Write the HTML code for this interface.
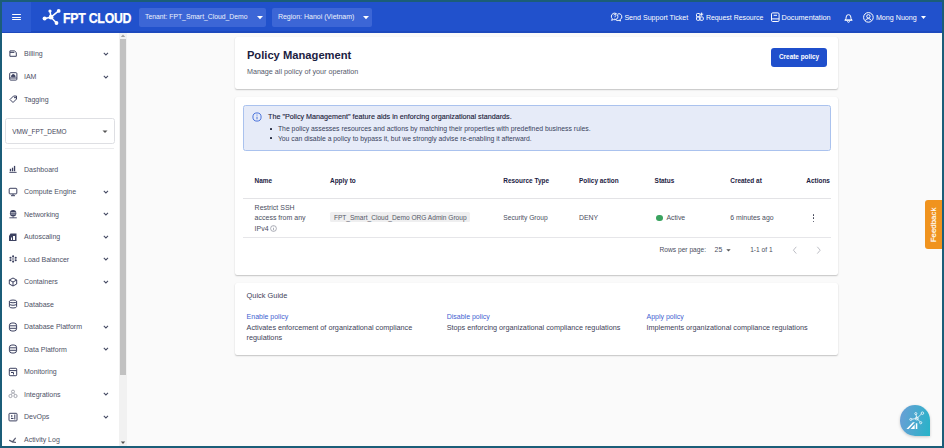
<!DOCTYPE html>
<html><head><meta charset="utf-8"><style>
html,body{margin:0;padding:0;width:944px;height:448px;overflow:hidden;position:relative;font-family:"Liberation Sans", sans-serif}
.t{position:absolute;line-height:1;white-space:nowrap}
</style></head><body>
<div style="position:absolute;left:0px;top:0px;width:944px;height:448px;background:#1b5d78"></div>
<div style="position:absolute;left:2px;top:2px;width:940px;height:444px;background:#fafafa"></div>
<div style="position:absolute;left:2px;top:2px;width:940px;height:30px;background:#2151cc"></div>
<div style="position:absolute;left:2px;top:31px;width:940px;height:1.5px;background:#1d49bd"></div>
<div style="position:absolute;left:2px;top:2px;width:29px;height:30px;background:#2c5bd2"></div>
<div style="position:absolute;left:11.6px;top:14.2px;width:9.3px;height:1.1px;background:#fff;border-radius:1px"></div>
<div style="position:absolute;left:11.6px;top:16.7px;width:9.3px;height:1.1px;background:#fff;border-radius:1px"></div>
<div style="position:absolute;left:11.6px;top:19.2px;width:9.3px;height:1.1px;background:#fff;border-radius:1px"></div>
<svg style="position:absolute;left:42px;top:8px;" width="20" height="18" viewBox="0 0 20 18"><g stroke="#fff" stroke-width="1.5" fill="#fff">
<line x1="9" y1="9.2" x2="2.6" y2="10.6"/><line x1="9" y1="9.2" x2="8" y2="3"/>
<line x1="9" y1="9.2" x2="16.7" y2="2.9"/><line x1="9" y1="9.2" x2="14.5" y2="15"/></g><g fill="#fff">
<circle cx="9" cy="9.2" r="2.4"/><circle cx="2.6" cy="10.6" r="2.0"/><circle cx="8" cy="3" r="1.6"/>
<circle cx="16.7" cy="2.9" r="1.9"/><circle cx="14.5" cy="15" r="1.9"/></g></svg>
<div class="t" style="left:62.90px;top:11px;font-size:14.6px;color:#fff;font-weight:700;letter-spacing:-0.3px;transform:scaleX(0.845);transform-origin:0 0;-webkit-text-stroke:0.25px #fff">FPT CLOUD</div>
<div style="position:absolute;left:138.9px;top:8.2px;width:126.9px;height:18.4px;background:#3c66d6;border-radius:2px"></div>
<div class="t" style="left:145.10px;top:14px;font-size:6.8px;color:#eef2fc;font-weight:400;">Tenant: FPT_Smart_Cloud_Demo</div>
<svg style="position:absolute;left:257px;top:16px;" width="7" height="4" viewBox="0 0 7 4"><path d="M0 0 L6 0 L3 3.2Z" fill="#fff"/></svg>
<div style="position:absolute;left:271.9px;top:8.2px;width:100.2px;height:18.4px;background:#3c66d6;border-radius:2px"></div>
<div class="t" style="left:277.90px;top:13px;font-size:7.0px;color:#eef2fc;font-weight:400;">Region: Hanoi (Vietnam)</div>
<svg style="position:absolute;left:363.4px;top:16px;" width="7" height="4" viewBox="0 0 7 4"><path d="M0 0 L6 0 L3 3.2Z" fill="#fff"/></svg>
<svg style="position:absolute;left:609.3px;top:8px;" width="16" height="16" viewBox="0 0 16 16"><g fill="none" stroke="#fff" stroke-width="0.95" stroke-linejoin="round">
<path d="M3.4 10.9 A3.3 3.3 0 1 1 4.6 11.6 L2.5 12.3 Z"/>
<path d="M8.8 5.9 A3 3 0 0 1 10.9 11.6 L11.6 13 L9.9 12.4 A3 3 0 0 1 6.6 11.6"/>
<path d="M4.9 7.3 a1.05 1.05 0 1 1 1.5 0.95 l-0.5 0.5 v0.45"/></g><circle cx="5.9" cy="10.2" r="0.45" fill="#fff"/></svg>
<div class="t" style="left:624.40px;top:15px;font-size:7.1px;color:#fff;font-weight:400;">Send Support Ticket</div>
<svg style="position:absolute;left:693px;top:8px;" width="15" height="16" viewBox="0 0 15 16"><g fill="none" stroke="#fff" stroke-width="0.95">
<rect x="3.5" y="5.5" width="3.4" height="3.4" rx="0.9"/><rect x="3.5" y="8.9" width="3.4" height="3.4" rx="0.9"/>
<rect x="6.9" y="8.9" width="3.4" height="3.4" rx="0.9"/><path d="M8.6 4.6 v3.2 M7 6.2 h3.2"/></g></svg>
<div class="t" style="left:705.90px;top:15px;font-size:6.95px;color:#fff;font-weight:400;">Request Resource</div>
<svg style="position:absolute;left:768px;top:8px;" width="16" height="16" viewBox="0 0 16 16"><g fill="none" stroke="#fff" stroke-width="1">
<rect x="3.5" y="4.9" width="7.6" height="8.6" rx="1.2"/><path d="M3.5 10.9 h7.6 M5.6 7.3 h3.4"/></g></svg>
<div class="t" style="left:781.40px;top:14px;font-size:7.33px;color:#fff;font-weight:400;">Documentation</div>
<svg style="position:absolute;left:843.5px;top:12px;" width="9" height="11" viewBox="0 0 9 11"><g fill="none" stroke="#fff" stroke-width="1">
<path d="M1.2 8 q1 -1 1 -3 a2.3 2.3 0 0 1 4.6 0 q0 2 1 3z"/><path d="M0.5 8.2 h8"/><path d="M3.5 9.3 a1 1 0 0 0 2 0"/></g></svg>
<svg style="position:absolute;left:862.8px;top:11.5px;" width="11" height="11" viewBox="0 0 11 11"><g fill="none" stroke="#fff" stroke-width="1">
<circle cx="5.4" cy="5.4" r="4.8"/><circle cx="5.4" cy="4.3" r="1.7"/><path d="M2.5 8.6 q0.6 -2 2.9 -2 q2.3 0 2.9 2"/></g></svg>
<div class="t" style="left:875.90px;top:15px;font-size:7.15px;color:#fff;font-weight:400;">Mong Nuong</div>
<svg style="position:absolute;left:920.5px;top:16px;" width="6" height="4" viewBox="0 0 6 4"><path d="M0 0 L5 0 L2.5 3Z" fill="#fff"/></svg>
<div style="position:absolute;left:2px;top:32.5px;width:117px;height:413.5px;background:#fff"></div>
<div style="position:absolute;left:119px;top:32.5px;width:8px;height:413.5px;background:#f1f1f1"></div>
<div style="position:absolute;left:119.8px;top:39.3px;width:6.4px;height:336px;background:#c1c1c1"></div>
<svg style="position:absolute;left:120px;top:33.5px;" width="6" height="4" viewBox="0 0 6 4"><path d="M0.8 3 L3 0.6 L5.2 3Z" fill="#a3a3a3"/></svg>
<svg style="position:absolute;left:120px;top:441px;" width="6" height="4" viewBox="0 0 6 4"><path d="M0.8 0.6 L3 3 L5.2 0.6Z" fill="#505050"/></svg>
<div class="t" style="left:24.00px;top:50px;font-size:7.0px;color:#4d5166;font-weight:400;">Billing</div>
<svg style="position:absolute;left:102.5px;top:52.0px;" width="6" height="4" viewBox="0 0 6 4"><path d="M0.8 0.8 L2.9 2.9 L5 0.8" fill="none" stroke="#454a63" stroke-width="1.05"/></svg>
<div class="t" style="left:24.00px;top:73px;font-size:7.0px;color:#4d5166;font-weight:400;">IAM</div>
<svg style="position:absolute;left:102.5px;top:74.6px;" width="6" height="4" viewBox="0 0 6 4"><path d="M0.8 0.8 L2.9 2.9 L5 0.8" fill="none" stroke="#454a63" stroke-width="1.05"/></svg>
<div class="t" style="left:24.00px;top:96px;font-size:7.0px;color:#4d5166;font-weight:400;">Tagging</div>
<svg style="position:absolute;left:8.5px;top:49.5px;" width="9" height="8" viewBox="0 0 9 8"><g fill="none" stroke="#3c4160" stroke-width="1"><path d="M0.9 0.9 h4.6 l1.8 1.6 v3.8 h-6.4z"/><path d="M0.9 2.4 h4.5"/></g></svg>
<svg style="position:absolute;left:8.5px;top:72px;" width="9" height="9" viewBox="0 0 9 9"><g fill="none" stroke="#3c4160" stroke-width="1"><rect x="0.7" y="0.7" width="7.2" height="7.4" rx="1"/><path d="M2.5 4.8 q0 -2.2 1.8 -2.2 q1.8 0 1.8 2.2z" fill="#3c4160"/><path d="M0.7 6 h7.2"/></g></svg>
<svg style="position:absolute;left:8.5px;top:94.5px;" width="9" height="9" viewBox="0 0 9 9"><g fill="none" stroke="#3c4160" stroke-width="1"><path d="M1 4.5 L4.5 1 h3 v3 L4 7.5z"/><circle cx="6" cy="2.6" r="0.5" fill="#3c4160"/></g></svg>
<div style="position:absolute;left:5.4px;top:118.1px;width:109.2px;height:25.9px;box-sizing:border-box;border:1px solid #dedfe3;border-radius:2.5px;background:#fff"></div>
<div class="t" style="left:12.20px;top:129px;font-size:6.45px;color:#3f4358;font-weight:400;">VMW_FPT_DEMO</div>
<svg style="position:absolute;left:102px;top:129.5px;" width="7" height="4" viewBox="0 0 7 4"><path d="M0.5 0.5 L5.5 0.5 L3 3Z" fill="#555"/></svg>
<div style="position:absolute;left:5.4px;top:148px;width:108.8px;height:1px;background:#ececee"></div>
<div class="t" style="left:24.00px;top:166px;font-size:7.0px;color:#4d5166;font-weight:400;">Dashboard</div>
<div class="t" style="left:24.00px;top:188px;font-size:7.0px;color:#4d5166;font-weight:400;">Compute Engine</div>
<svg style="position:absolute;left:102.5px;top:189.6px;" width="6" height="4" viewBox="0 0 6 4"><path d="M0.8 0.8 L2.9 2.9 L5 0.8" fill="none" stroke="#454a63" stroke-width="1.05"/></svg>
<div class="t" style="left:24.00px;top:211px;font-size:7.0px;color:#4d5166;font-weight:400;">Networking</div>
<svg style="position:absolute;left:102.5px;top:212.1px;" width="6" height="4" viewBox="0 0 6 4"><path d="M0.8 0.8 L2.9 2.9 L5 0.8" fill="none" stroke="#454a63" stroke-width="1.05"/></svg>
<div class="t" style="left:24.00px;top:233px;font-size:7.0px;color:#4d5166;font-weight:400;">Autoscaling</div>
<svg style="position:absolute;left:102.5px;top:234.6px;" width="6" height="4" viewBox="0 0 6 4"><path d="M0.8 0.8 L2.9 2.9 L5 0.8" fill="none" stroke="#454a63" stroke-width="1.05"/></svg>
<div class="t" style="left:24.00px;top:256px;font-size:7.0px;color:#4d5166;font-weight:400;">Load Balancer</div>
<svg style="position:absolute;left:102.5px;top:257.1px;" width="6" height="4" viewBox="0 0 6 4"><path d="M0.8 0.8 L2.9 2.9 L5 0.8" fill="none" stroke="#454a63" stroke-width="1.05"/></svg>
<div class="t" style="left:24.00px;top:278px;font-size:7.0px;color:#4d5166;font-weight:400;">Containers</div>
<svg style="position:absolute;left:102.5px;top:279.6px;" width="6" height="4" viewBox="0 0 6 4"><path d="M0.8 0.8 L2.9 2.9 L5 0.8" fill="none" stroke="#454a63" stroke-width="1.05"/></svg>
<div class="t" style="left:24.00px;top:301px;font-size:7.0px;color:#4d5166;font-weight:400;">Database</div>
<div class="t" style="left:24.00px;top:323px;font-size:7.0px;color:#4d5166;font-weight:400;">Database Platform</div>
<svg style="position:absolute;left:102.5px;top:324.6px;" width="6" height="4" viewBox="0 0 6 4"><path d="M0.8 0.8 L2.9 2.9 L5 0.8" fill="none" stroke="#454a63" stroke-width="1.05"/></svg>
<div class="t" style="left:24.00px;top:346px;font-size:7.0px;color:#4d5166;font-weight:400;">Data Platform</div>
<svg style="position:absolute;left:102.5px;top:347.1px;" width="6" height="4" viewBox="0 0 6 4"><path d="M0.8 0.8 L2.9 2.9 L5 0.8" fill="none" stroke="#454a63" stroke-width="1.05"/></svg>
<div class="t" style="left:24.00px;top:368px;font-size:7.0px;color:#4d5166;font-weight:400;">Monitoring</div>
<div class="t" style="left:24.00px;top:391px;font-size:7.0px;color:#4d5166;font-weight:400;">Integrations</div>
<svg style="position:absolute;left:102.5px;top:392.1px;" width="6" height="4" viewBox="0 0 6 4"><path d="M0.8 0.8 L2.9 2.9 L5 0.8" fill="none" stroke="#454a63" stroke-width="1.05"/></svg>
<div class="t" style="left:24.00px;top:413px;font-size:7.0px;color:#4d5166;font-weight:400;">DevOps</div>
<svg style="position:absolute;left:102.5px;top:414.6px;" width="6" height="4" viewBox="0 0 6 4"><path d="M0.8 0.8 L2.9 2.9 L5 0.8" fill="none" stroke="#454a63" stroke-width="1.05"/></svg>
<div class="t" style="left:24.00px;top:436px;font-size:7.0px;color:#4d5166;font-weight:400;">Activity Log</div>
<svg style="position:absolute;left:8.2px;top:164.2px;" width="10" height="10" viewBox="0 0 10 10"><path d="M1.4 8.4 h7.2" stroke="#3c4160" stroke-width="0.9"/><g fill="#3c4160"><rect x="1.8" y="4.8" width="1.3" height="2.5"/><rect x="3.9" y="3.7" width="1.3" height="3.6"/><rect x="5.9" y="1.9" width="1.3" height="5.4"/></g></svg>
<svg style="position:absolute;left:8.2px;top:186.7px;" width="10" height="10" viewBox="0 0 10 10"><g fill="none" stroke="#3c4160" stroke-width="1"><rect x="1.2" y="1.3" width="7.6" height="5.6" rx="0.8"/><path d="M5 7 v1.5 M3 8.7 h4"/></g></svg>
<svg style="position:absolute;left:8.2px;top:209.2px;" width="10" height="10" viewBox="0 0 10 10"><circle cx="5.1" cy="4.3" r="3.2" fill="#3c4160"/><path d="M2.6 3.6 h5 M2.6 5.1 h5" stroke="#fff" stroke-width="0.6"/><path d="M5.1 7.4 v1.2 M1.4 8.8 h7.4" stroke="#3c4160" stroke-width="0.9"/></svg>
<svg style="position:absolute;left:8.2px;top:231.7px;" width="10" height="10" viewBox="0 0 10 10"><path d="M2.5 1.5 h6 v7.5 h-7.5 v-5z" fill="#3c4160"/><path d="M5 4 h2 v4 h-2z M3 5.5 h1 v2.5h-1z" fill="#fff"/></svg>
<svg style="position:absolute;left:8.2px;top:254.2px;" width="10" height="10" viewBox="0 0 10 10"><g fill="#3c4160"><circle cx="5.1" cy="2.4" r="1.05"/><circle cx="2.5" cy="3.8" r="1.05"/><circle cx="7.7" cy="3.8" r="1.05"/><circle cx="2.5" cy="6.3" r="1.05"/><circle cx="7.7" cy="6.3" r="1.05"/><circle cx="5.1" cy="7.6" r="1.05"/></g><circle cx="5.1" cy="5" r="0.9" fill="none" stroke="#3c4160" stroke-width="0.5"/></svg>
<svg style="position:absolute;left:8.2px;top:276.7px;" width="10" height="10" viewBox="0 0 10 10"><g fill="none" stroke="#3c4160" stroke-width="1"><path d="M5 1 L8.7 3 v4 L5 9 L1.3 7 v-4z M1.3 3 L5 5 L8.7 3 M5 5 v4"/></g></svg>
<svg style="position:absolute;left:8.2px;top:299.2px;" width="10" height="10" viewBox="0 0 10 10"><g fill="none" stroke="#3c4160" stroke-width="1"><ellipse cx="5" cy="2.4" rx="3.6" ry="1.4"/><path d="M1.4 2.4 v5.2 q0 1.4 3.6 1.4 q3.6 0 3.6 -1.4 v-5.2 M1.4 4.9 q0 1.4 3.6 1.4 q3.6 0 3.6 -1.4"/></g></svg>
<svg style="position:absolute;left:8.2px;top:321.7px;" width="10" height="10" viewBox="0 0 10 10"><g fill="none" stroke="#3c4160" stroke-width="1"><rect x="1.4" y="1" width="7.2" height="8" rx="2.5"/><path d="M1.4 3.8 h7.2 M1.4 6.3 h7.2"/></g></svg>
<svg style="position:absolute;left:8.2px;top:344.2px;" width="10" height="10" viewBox="0 0 10 10"><g fill="none" stroke="#3c4160" stroke-width="1"><rect x="1.4" y="1" width="7.2" height="8" rx="2.5"/><path d="M1.4 3.8 h7.2 M1.4 6.3 h7.2"/></g></svg>
<svg style="position:absolute;left:8.2px;top:366.7px;" width="10" height="10" viewBox="0 0 10 10"><g fill="none" stroke="#3c4160" stroke-width="1"><rect x="1.3" y="1.3" width="7.4" height="7.4" rx="0.8"/><path d="M1.3 3.6 h7.4 M3 5.5 h2.5 v2"/></g></svg>
<svg style="position:absolute;left:8.2px;top:389.2px;" width="10" height="10" viewBox="0 0 10 10"><g fill="none" stroke="#9a9ca6" stroke-width="0.9"><circle cx="5" cy="2.6" r="1.5"/><circle cx="2.5" cy="7" r="1.6"/><circle cx="7.5" cy="7" r="1.6"/><path d="M4.3 4 L3.3 5.6 M5.7 4 L6.7 5.6"/></g></svg>
<svg style="position:absolute;left:8.2px;top:411.7px;" width="10" height="10" viewBox="0 0 10 10"><g fill="none" stroke="#3c4160" stroke-width="1"><rect x="1" y="1.3" width="8" height="7.6" rx="0.8"/><path d="M3 6.5 h2.5 M3.8 3 v2.3 M6.8 2.5 v5"/></g></svg>
<svg style="position:absolute;left:8.2px;top:434.2px;" width="10" height="10" viewBox="0 0 10 10"><g fill="none" stroke="#5a5d72" stroke-width="1.3" stroke-linecap="round"><path d="M1.6 6.4 L4.4 7.9 L7.3 4.3 M4.4 7.9 L7.4 8.3"/></g></svg>
<div style="position:absolute;left:235px;top:36.5px;width:603px;height:52.5px;background:#fff;border-radius:2px;box-shadow:0 1px 1.5px rgba(0,0,0,0.22),0 0 1px rgba(0,0,0,0.05)"></div>
<div class="t" style="left:246.90px;top:50px;font-size:11.2px;color:#1b2142;font-weight:700;">Policy Management</div>
<div class="t" style="left:246.90px;top:68px;font-size:7.2px;color:#555a6c;font-weight:400;">Manage all policy of your operation</div>
<div style="position:absolute;left:770.9px;top:48.4px;width:55.8px;height:18.3px;background:#1f4fcc;border-radius:3px"></div>
<div class="t" style="left:779.00px;top:54px;font-size:6.4px;color:#fff;font-weight:700;">Create policy</div>
<div style="position:absolute;left:235px;top:97.2px;width:603px;height:177.6px;background:#fff;border-radius:2px;box-shadow:0 1px 1.5px rgba(0,0,0,0.22),0 0 1px rgba(0,0,0,0.05)"></div>
<div style="position:absolute;left:242.8px;top:105.2px;width:588.1px;height:45.7px;box-sizing:border-box;background:#e6ebf8;border:1px solid #aac2ee;border-radius:2.5px"></div>
<svg style="position:absolute;left:251.5px;top:112px;" width="10" height="10" viewBox="0 0 10 10"><g fill="none" stroke="#3a66d8" stroke-width="0.9"><circle cx="5" cy="5" r="4.1"/><path d="M5 4.7 v2.6"/></g><circle cx="5" cy="3.0" r="0.55" fill="#3a66d8"/></svg>
<div class="t" style="left:268.00px;top:113px;font-size:7.19px;color:#1a2038;font-weight:400;-webkit-text-stroke:0.12px #1a2038">The "Policy Management" feature aids in enforcing organizational standards.</div>
<div style="position:absolute;left:270.4px;top:128.0px;width:2px;height:2px;background:#2a2f45;border-radius:0.5px"></div>
<div class="t" style="left:277.90px;top:126px;font-size:6.85px;color:#383f5c;font-weight:400;">The policy assesses resources and actions by matching their properties with predefined business rules.</div>
<div style="position:absolute;left:270.4px;top:137.2px;width:2px;height:2px;background:#2a2f45;border-radius:0.5px"></div>
<div class="t" style="left:277.90px;top:136px;font-size:6.82px;color:#383f5c;font-weight:400;">You can disable a policy to bypass it, but we strongly advise re-enabling it afterward.</div>
<div class="t" style="left:254.60px;top:178px;font-size:6.45px;color:#1b2142;font-weight:700;">Name</div>
<div class="t" style="left:330.00px;top:178px;font-size:6.45px;color:#1b2142;font-weight:700;">Apply to</div>
<div class="t" style="left:503.30px;top:178px;font-size:6.45px;color:#1b2142;font-weight:700;">Resource Type</div>
<div class="t" style="left:579.00px;top:178px;font-size:6.45px;color:#1b2142;font-weight:700;">Policy action</div>
<div class="t" style="left:654.60px;top:178px;font-size:6.45px;color:#1b2142;font-weight:700;">Status</div>
<div class="t" style="left:730.30px;top:178px;font-size:6.45px;color:#1b2142;font-weight:700;">Created at</div>
<div class="t" style="left:806.30px;top:178px;font-size:6.45px;color:#1b2142;font-weight:700;">Actions</div>
<div style="position:absolute;left:242.9px;top:198px;width:588px;height:1px;background:#e3e3e6"></div>
<div class="t" style="left:254.60px;top:204px;font-size:7.0px;color:#4a4e60;font-weight:400;">Restrict SSH</div>
<div class="t" style="left:254.60px;top:214px;font-size:7.0px;color:#4a4e60;font-weight:400;">access from any</div>
<div class="t" style="left:254.60px;top:225px;font-size:7.0px;color:#4a4e60;font-weight:400;">IPv4</div>
<svg style="position:absolute;left:269.5px;top:225px;" width="7" height="7" viewBox="0 0 7 7"><g fill="none" stroke="#8a8d99" stroke-width="0.7"><circle cx="3.5" cy="3.5" r="2.9"/><path d="M3.5 3 v2.2"/></g><circle cx="3.5" cy="1.9" r="0.4" fill="#8a8d99"/></svg>
<div style="position:absolute;left:330.2px;top:212px;width:139.8px;height:9.8px;background:#efeff0;border-radius:1.5px"></div>
<div class="t" style="left:333.90px;top:215px;font-size:6.58px;color:#555866;font-weight:400;">FPT_Smart_Cloud_Demo ORG Admin Group</div>
<div class="t" style="left:503.30px;top:215px;font-size:6.65px;color:#4a4e60;font-weight:400;">Security Group</div>
<div class="t" style="left:579.00px;top:215px;font-size:6.9px;color:#4a4e60;font-weight:400;">DENY</div>
<div style="position:absolute;left:656.3px;top:214.8px;width:6.5px;height:6.5px;background:#3aa35f;border-radius:50%"></div>
<div class="t" style="left:666.40px;top:215px;font-size:6.9px;color:#4a4e60;font-weight:400;">Active</div>
<div class="t" style="left:730.30px;top:215px;font-size:6.9px;color:#4a4e60;font-weight:400;">6 minutes ago</div>
<div style="position:absolute;left:812.6px;top:214.2px;width:1.5px;height:1.5px;background:#3a3d50;border-radius:50%"></div>
<div style="position:absolute;left:812.6px;top:217.4px;width:1.5px;height:1.5px;background:#3a3d50;border-radius:50%"></div>
<div style="position:absolute;left:812.6px;top:220.6px;width:1.5px;height:1.5px;background:#3a3d50;border-radius:50%"></div>
<div style="position:absolute;left:242.9px;top:237px;width:588px;height:1px;background:#e6e6e9"></div>
<div class="t" style="left:659.50px;top:247px;font-size:6.65px;color:#4a4e60;font-weight:400;">Rows per page:</div>
<div class="t" style="left:714.60px;top:247px;font-size:6.9px;color:#4a4e60;font-weight:400;">25</div>
<svg style="position:absolute;left:725.5px;top:248.5px;" width="6" height="4" viewBox="0 0 6 4"><path d="M0.3 0.3 L4.7 0.3 L2.5 2.6Z" fill="#555"/></svg>
<div class="t" style="left:750.20px;top:247px;font-size:6.6px;color:#4a4e60;font-weight:400;">1-1 of 1</div>
<svg style="position:absolute;left:792px;top:245.5px;" width="6" height="9" viewBox="0 0 6 9"><path d="M4.3 0.8 L1.4 4.2 L4.3 7.6" fill="none" stroke="#b5b7be" stroke-width="0.9"/></svg>
<svg style="position:absolute;left:815.5px;top:245.5px;" width="6" height="9" viewBox="0 0 6 9"><path d="M1.3 0.8 L4.2 4.2 L1.3 7.6" fill="none" stroke="#b5b7be" stroke-width="0.9"/></svg>
<div style="position:absolute;left:235px;top:282.7px;width:603px;height:72.3px;background:#fff;border-radius:2px;box-shadow:0 1px 1.5px rgba(0,0,0,0.22),0 0 1px rgba(0,0,0,0.05)"></div>
<div class="t" style="left:246.60px;top:292px;font-size:7.4px;color:#3e4258;font-weight:400;">Quick Guide</div>
<div class="t" style="left:246.60px;top:313px;font-size:7.0px;color:#3f5fd1;font-weight:400;">Enable policy</div>
<div class="t" style="left:246.60px;top:324px;font-size:7.25px;color:#3e4258;font-weight:400;">Activates enforcement of organizational compliance</div>
<div class="t" style="left:246.60px;top:334px;font-size:7.25px;color:#3e4258;font-weight:400;">regulations</div>
<div class="t" style="left:446.70px;top:313px;font-size:7.0px;color:#3f5fd1;font-weight:400;">Disable policy</div>
<div class="t" style="left:446.70px;top:324px;font-size:7.25px;color:#3e4258;font-weight:400;">Stops enforcing organizational compliance regulations</div>
<div class="t" style="left:646.50px;top:313px;font-size:7.0px;color:#3f5fd1;font-weight:400;">Apply policy</div>
<div class="t" style="left:646.50px;top:324px;font-size:7.28px;color:#3e4258;font-weight:400;">Implements organizational compliance regulations</div>
<div style="position:absolute;left:925px;top:199.7px;width:17px;height:49.3px;background:#f0931e;border-radius:3px 0 0 3px"></div>
<div class="t" style="left:933.5px;top:224.5px;font-size:7.9px;color:#fff;transform:translate(-50%,-50%) rotate(-90deg);line-height:1;-webkit-text-stroke:0.15px #fff">Feedback</div>
<div style="position:absolute;left:899.5px;top:405px;width:30.5px;height:30.5px;border-radius:50% 50% 0 50%;background:linear-gradient(100deg,#6c9ed6,#27b3c8);box-shadow:0 1px 3px rgba(0,0,0,0.2)"></div>
<svg style="position:absolute;left:896px;top:402px;" width="38" height="38" viewBox="0 0 38 38"><g stroke="#fff" stroke-width="0.75" fill="none">
<path d="M20.8 16.5 L15.6 17.2 M20.8 16.5 L20 12.4 M20.8 16.5 L25.6 11.8 M20.8 16.5 L24.2 19.8"/>
<circle cx="14.8" cy="17.4" r="1.05"/><circle cx="19.8" cy="11.6" r="1.05"/><circle cx="26.4" cy="11.2" r="1.25"/><circle cx="24.7" cy="20.7" r="1.1"/><circle cx="20.8" cy="16.5" r="1.5"/></g>
<path d="M10.4 26.9 L16.9 20.2 L18.9 20.2 L12.6 26.9z M14.6 26.9 L18.7 22.6 L18.7 26.9z M19.8 21.3 h1.5 v5.6 h-1.5z" fill="#fff"/></svg>
</body></html>
